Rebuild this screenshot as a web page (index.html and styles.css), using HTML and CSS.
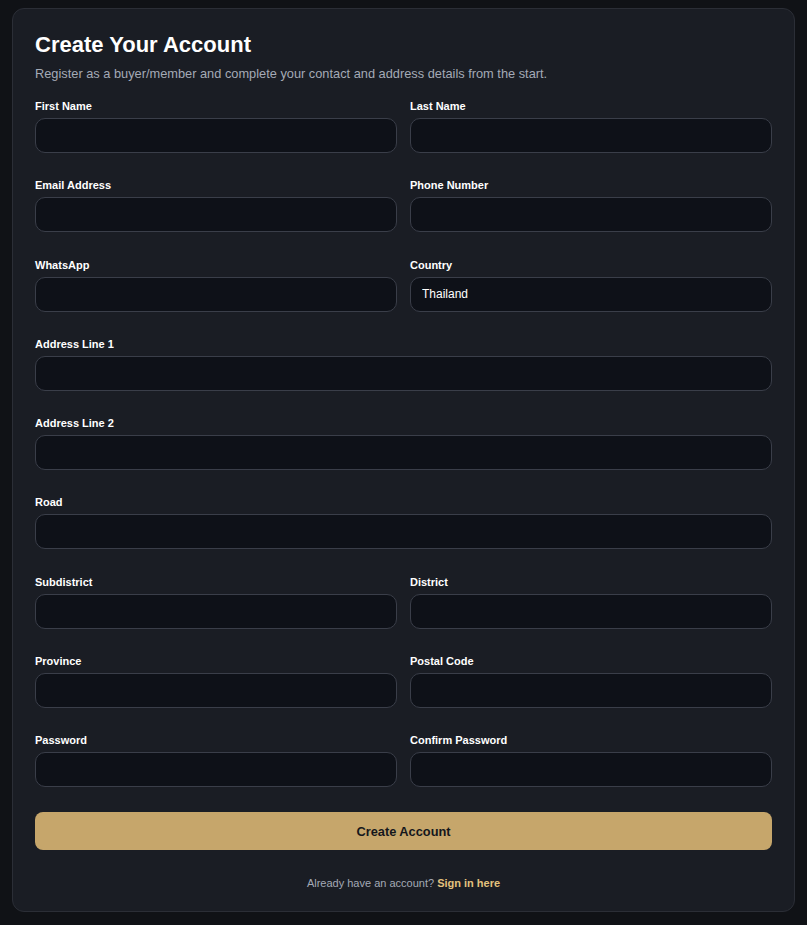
FILE: index.html
```html
<!DOCTYPE html>
<html lang="en">
<head>
    <meta charset="UTF-8">
    <meta name="viewport" content="width=device-width, initial-scale=1.0">
    <title>Create Your Account</title>
    <link rel="stylesheet" href="styles.css">
</head>
<body>
    <div class="register-card">
        <h1 class="register-title">Create Your Account</h1>
        <p class="register-subtitle">Register as a buyer/member and complete your contact and address details from the start.</p>

        <form id="registerForm" class="register-form">
            <!-- Contact details -->
            <div class="form-group">
                <label for="firstName">First Name</label>
                <input type="text" id="firstName" name="firstName">
            </div>
            <div class="form-group">
                <label for="lastName">Last Name</label>
                <input type="text" id="lastName" name="lastName">
            </div>
            <div class="form-group">
                <label for="email">Email Address</label>
                <input type="email" id="email" name="email">
            </div>
            <div class="form-group">
                <label for="phone">Phone Number</label>
                <input type="tel" id="phone" name="phone">
            </div>
            <div class="form-group">
                <label for="whatsapp">WhatsApp</label>
                <input type="text" id="whatsapp" name="whatsapp">
            </div>
            <div class="form-group">
                <label for="country">Country</label>
                <input type="text" id="country" name="country" value="Thailand">
            </div>

            <!-- Address details -->
            <div class="form-group full">
                <label for="address1">Address Line 1</label>
                <input type="text" id="address1" name="address1">
            </div>
            <div class="form-group full">
                <label for="address2">Address Line 2</label>
                <input type="text" id="address2" name="address2">
            </div>
            <div class="form-group full">
                <label for="road">Road</label>
                <input type="text" id="road" name="road">
            </div>
            <div class="form-group">
                <label for="subdistrict">Subdistrict</label>
                <input type="text" id="subdistrict" name="subdistrict">
            </div>
            <div class="form-group">
                <label for="district">District</label>
                <input type="text" id="district" name="district">
            </div>
            <div class="form-group">
                <label for="province">Province</label>
                <input type="text" id="province" name="province">
            </div>
            <div class="form-group">
                <label for="postalCode">Postal Code</label>
                <input type="text" id="postalCode" name="postalCode">
            </div>

            <!-- Credentials -->
            <div class="form-group">
                <label for="password">Password</label>
                <input type="password" id="password" name="password">
            </div>
            <div class="form-group">
                <label for="confirmPassword">Confirm Password</label>
                <input type="password" id="confirmPassword" name="confirmPassword">
            </div>

            <button type="submit" class="submit-button">Create Account</button>
        </form>

        <p class="signin-note">Already have an account? <a href="#" class="signin-link">Sign in here</a></p>
    </div>
</body>
</html>
```

FILE: styles.css
```css
body {
    font-family: "Liberation Sans", Arial, sans-serif;
    background: #101216;
    margin: 0;
    padding: 8px 12px;
}
.register-card {
    background: #1a1d24;
    border: 1px solid #2b2e36;
    border-radius: 12px;
    padding: 23px 22px 22px;
}
.register-title {
    color: #ffffff;
    font-size: 22px;
    font-weight: bold;
    margin: 0 0 8px;
}
.register-subtitle {
    color: #a4aab6;
    font-size: 12.8px;
    margin: 0 0 19px;
}
.register-form {
    display: grid;
    grid-template-columns: 1fr 1fr;
    column-gap: 13px;
    row-gap: 26.25px;
}
.form-group.full {
    grid-column: 1 / -1;
}
label {
    display: block;
    color: #ffffff;
    font-size: 11px;
    font-weight: bold;
    line-height: 13px;
    margin-bottom: 5px;
}
input {
    display: block;
    width: 100%;
    height: 35px;
    box-sizing: border-box;
    padding: 0 11px;
    background: #0e1118;
    border: 1px solid #3a3e49;
    border-radius: 10px;
    color: #ffffff;
    font-family: inherit;
    font-size: 12px;
}
.submit-button {
    grid-column: 1 / -1;
    height: 38px;
    margin-top: -1px;
    background: #c6a66b;
    color: #15171c;
    border: none;
    border-radius: 8px;
    font-family: inherit;
    font-size: 12.8px;
    font-weight: bold;
    cursor: pointer;
}
.signin-note {
    text-align: center;
    color: #a4aab6;
    font-size: 11px;
    margin: 27px 0 0;
}
.signin-link {
    color: #e3c27e;
    font-weight: bold;
    text-decoration: none;
}
```
